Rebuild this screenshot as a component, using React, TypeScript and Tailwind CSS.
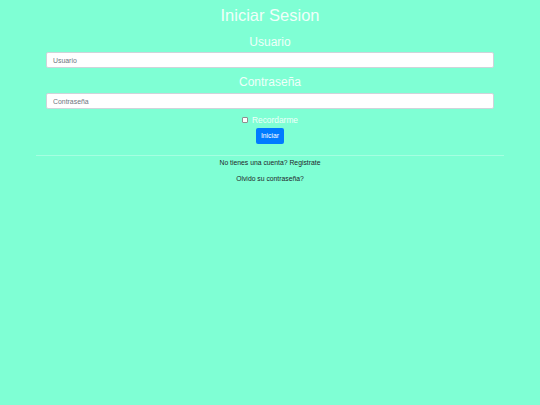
export default function App() {
  const labelClassName = "pt-[3px] text-center text-[12px] text-[#effffa]";
  const inputClassName =
    "block h-[16px] w-full rounded-[2px] border border-[#ced4da] bg-white px-[6px] text-[6.9px] text-[#495057] outline-none placeholder:text-[#6c757d]";

  return (
    <div
      className="min-h-[405px] w-full bg-[#7fffd4] px-[36px]"
      style={{ fontFamily: '"Liberation Sans", Arial, sans-serif' }}
    >
      <div className="flex flex-col px-[10px]">
        <h1 className="text-center text-[16.5px] leading-[30px] text-[#effffa]">Iniciar Sesion</h1>

        <label className={`${labelClassName} leading-[19px]`}>Usuario</label>
        <input type="text" placeholder="Usuario" className={inputClassName} style={{ fontFamily: "inherit" }} />

        <label className={`${labelClassName} leading-[22px]`}>Contraseña</label>
        <input type="password" placeholder="Contraseña" className={inputClassName} style={{ fontFamily: "inherit" }} />

        <div className="mt-[4px] flex h-[14px] items-center justify-center gap-[4px]">
          <span className="h-[6px] w-[6px] rounded-[1px] border border-[#8f8f8f] bg-white" />
          <span className="text-[8.4px] text-[#effffa]">Recordarme</span>
        </div>

        <div className="mt-[1px] flex justify-center">
          <button
            type="button"
            className="h-[16px] w-[28px] rounded-[2px] bg-[#007bff] text-[6.8px] text-white"
            style={{ fontFamily: "inherit" }}
          >
            Iniciar
          </button>
        </div>
      </div>

      <div className="mt-[11px] h-px w-full bg-white/30" />

      <p className="text-center text-[6.8px] leading-[14px] text-[#212529]">No tienes una cuenta? Registrate</p>
      <p className="mt-[2px] text-center text-[6.8px] leading-[14px] text-[#212529]">Olvido su contraseña?</p>
    </div>
  );
}
